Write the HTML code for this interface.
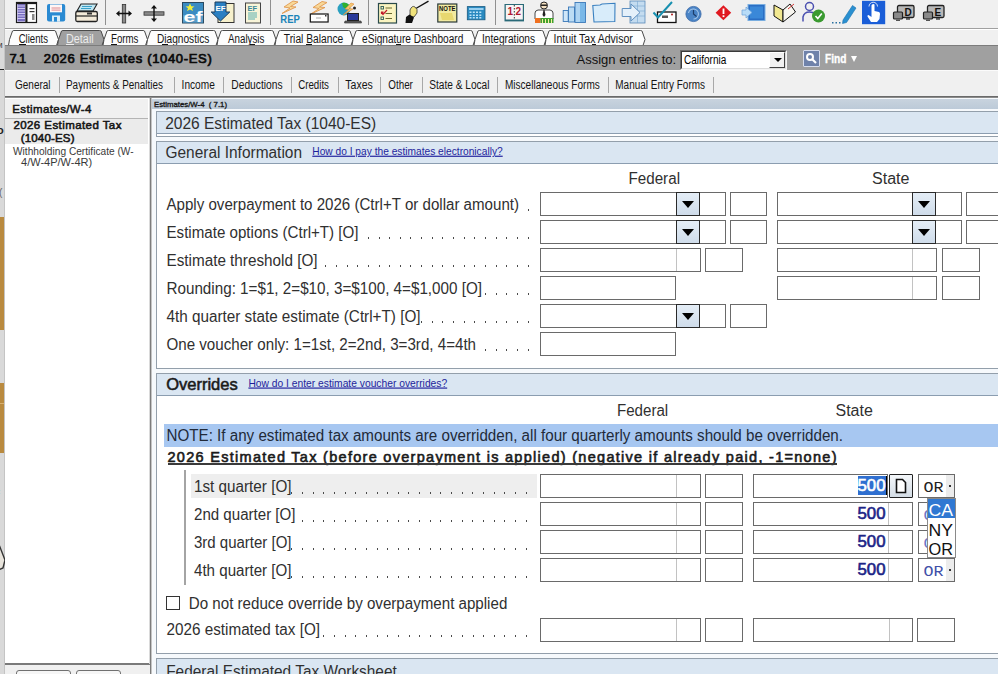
<!DOCTYPE html><html><head><meta charset="utf-8"><style>
*{margin:0;padding:0;box-sizing:border-box}
html,body{width:998px;height:674px;overflow:hidden;background:#f0f0f0;font-family:"Liberation Sans",sans-serif;color:#000}
.a{position:absolute}
.t{position:absolute;white-space:nowrap}
.inp{position:absolute;border:1px solid #6a6a6a;background:#fff}
.dd{position:absolute;width:24px;height:24px;background:linear-gradient(#e4edf6,#cfdcea);border:1px solid #2a2a2a}
.dd:after{content:"";position:absolute;left:5px;top:8px;border-left:6px solid transparent;border-right:6px solid transparent;border-top:7px solid #000}
.dots{position:absolute;height:2px;background-image:linear-gradient(to right,#5a5a5a 1.3px,transparent 1.3px);background-size:10.6px 2px;background-repeat:repeat-x;background-position:right top}
.box{position:absolute;border:1px solid #939fab;background:#fff}
.hdr{position:absolute;left:0;top:0;right:0;background:#dae6f2;border-bottom:1px solid #8b9db0}
</style></head><body>
<div class="a" style="left:0px;top:0px;width:5px;height:674px;background:#d9d9d9;"></div>
<div class="a" style="left:0px;top:217px;width:5px;height:113px;background:#b98a3f;"></div>
<div class="a" style="left:0px;top:383px;width:5px;height:70px;background:#b98a3f;"></div>
<div class="a" style="left:0px;top:403px;width:5px;height:1px;background:#d8b070;"></div>
<svg class="a" style="left:0;top:0;overflow:visible" width="1" height="1"><text x="-4" y="48" font-family="Liberation Sans" font-size="8" font-weight="normal" fill="#333" style="" text-decoration="">M</text></svg>
<div class="a" style="left:0px;top:69px;width:4px;height:1px;background:#222;"></div>
<svg class="a" style="left:0;top:0;overflow:visible" width="1" height="1"><text x="-3" y="133.5" font-family="Liberation Sans" font-size="11" font-weight="bold" fill="#222" style="" text-decoration="">o</text></svg>
<svg class="a" style="left:0;top:0;overflow:visible" width="1" height="1"><text x="-1" y="196" font-family="Liberation Sans" font-size="10" font-weight="normal" fill="#666" style="" text-decoration="">(</text></svg>
<div class="a" style="left:4px;top:0px;width:1px;height:674px;background:#c4c4c4;"></div>
<svg class="a" style="left:0;top:0;overflow:visible" width="1" height="1"><text x="-7" y="367" font-family="Liberation Sans" font-size="11" font-weight="bold" fill="#222" style="" text-decoration="">l</text></svg>
<svg class="a" style="left:0;top:0;overflow:visible" width="1" height="1"><text x="-6" y="495" font-family="Liberation Sans" font-size="11" font-weight="bold" fill="#2a6ad0" style="" text-decoration="">c</text></svg>
<svg class="a" style="left:0;top:540px" width="6" height="40"><path d="M-2,2 L5,20 L3,28 L-2,30" fill="#e8e4dc" stroke="#333" stroke-width="1.4"/></svg>
<div class="a" style="left:5px;top:0px;width:993px;height:28px;background:#f0f0f0;"></div>
<div class="a" style="left:5px;top:28px;width:993px;height:1px;background:#a0a0a0;"></div>
<div class="a" style="left:5px;top:29px;width:993px;height:1px;background:#ffffff;"></div>
<div class="a" style="left:105px;top:0px;width:1px;height:25px;background:#909090;"></div>
<div class="a" style="left:270px;top:0px;width:1px;height:25px;background:#909090;"></div>
<div class="a" style="left:368px;top:0px;width:1px;height:25px;background:#909090;"></div>
<div class="a" style="left:495px;top:0px;width:1px;height:25px;background:#909090;"></div>
<svg class="a" style="left:0;top:0" width="998" height="28" viewBox="0 0 998 28">
<!-- 1 form view -->
<rect x="16.5" y="2.5" width="20" height="20" fill="#fff" stroke="#1a1a1a" stroke-width="1.2"/>
<rect x="17.5" y="3.5" width="7.5" height="18" fill="#7a6fc0"/>
<g stroke="#e6e2ff" stroke-width="0.8"><line x1="17.5" y1="6" x2="25" y2="6"/><line x1="17.5" y1="8.5" x2="25" y2="8.5"/><line x1="17.5" y1="11" x2="25" y2="11"/><line x1="17.5" y1="13.5" x2="25" y2="13.5"/><line x1="17.5" y1="16" x2="25" y2="16"/><line x1="17.5" y1="18.5" x2="25" y2="18.5"/></g>
<rect x="25.3" y="2.5" width="2.2" height="20" fill="#1a1a1a"/>
<rect x="16.5" y="2.5" width="20" height="1.6" fill="#1a1a1a"/>
<rect x="29.5" y="8" width="5" height="1.2" fill="#333"/><rect x="29.5" y="11" width="5" height="1.2" fill="#333"/>
<rect x="32" y="14" width="2.5" height="6" fill="#888"/>
<!-- 2 floppy -->
<rect x="47" y="4" width="18.2" height="17.6" rx="2" fill="#2a8ad2"/>
<rect x="50" y="4.5" width="12" height="7.8" fill="#fdf6f6"/>
<rect x="51.5" y="7.5" width="9" height="1" fill="#e08a90"/><rect x="51.5" y="9.6" width="9" height="1" fill="#e08a90"/>
<rect x="52" y="15.5" width="8" height="6" fill="#dbeef8"/><rect x="54" y="17" width="3" height="4.6" fill="#2a8ad2"/>
<!-- 3 printer -->
<path d="M81,4 L97,4 L93,11 L77,11 Z" fill="#bfe6f2" stroke="#222" stroke-width="1.1"/>
<line x1="82" y1="6.5" x2="92" y2="6.5" stroke="#3aa0c8" stroke-width="1"/><line x1="81" y1="8.5" x2="91" y2="8.5" stroke="#3aa0c8" stroke-width="1"/>
<rect x="75.8" y="11.5" width="21.5" height="10" rx="1.5" fill="#f3ead8" stroke="#222" stroke-width="1.3"/>
<line x1="76" y1="16" x2="97" y2="16" stroke="#222" stroke-width="1.2"/>
<rect x="87" y="12.5" width="5" height="2" fill="#333"/>
<!-- 4 split vertical -->
<rect x="122.3" y="4.5" width="3.4" height="18.5" fill="#8a8a8a" stroke="#333" stroke-width="0.8"/>
<path d="M116,13.5 L119.5,10.5 L119.5,12.8 L128.5,12.8 L128.5,10.5 L132,13.5 L128.5,16.5 L128.5,14.2 L119.5,14.2 L119.5,16.5 Z" fill="#111"/>
<!-- 5 split horizontal -->
<rect x="144" y="11.8" width="20" height="3.4" fill="#8a8a8a" stroke="#333" stroke-width="0.8"/>
<path d="M154,5 L157,8.5 L154.7,8.5 L154.7,18.5 L157,18.5 L154,22 L151,18.5 L153.3,18.5 L153.3,8.5 L151,8.5 Z" fill="#111"/>
<!-- 6 ef -->
<rect x="182.5" y="2.5" width="21" height="20.5" fill="#3b8cc2" stroke="#2a4a60" stroke-width="1"/>
<rect x="183" y="15" width="20" height="7.5" fill="#5a9cc8"/>
<path d="M190,3.5 L191.3,6.3 L194.5,6.5 L192,8.3 L193,11 L190,9.5 L187,11 L188,8.3 L185.5,6.5 L188.7,6.3 Z" fill="#f2f03a"/>
<text x="183.5" y="21.5" font-family="Liberation Sans" font-weight="bold" font-size="14" fill="#fff" textLength="19" lengthAdjust="spacingAndGlyphs">ef</text>
<!-- 7 EF download -->
<rect x="218" y="3.5" width="16" height="19" fill="#f6f0cc" stroke="#333" stroke-width="1"/>
<path d="M215,2 L226,2 L226,12 L229.8,12 L220.5,21 L211.2,12 L215,12 Z" fill="#2a7fc2" stroke="#1d3d5a" stroke-width="1"/>
<text x="215.5" y="10.5" font-family="Liberation Sans" font-weight="bold" font-size="8" fill="#fff">EF</text>
<!-- 8 EF doc -->
<rect x="245.5" y="3" width="15" height="20" fill="#f8f4d8" stroke="#444" stroke-width="1"/>
<text x="247.5" y="11" font-family="Liberation Sans" font-weight="bold" font-size="7.5" fill="#3a8a9a">EF</text>
<g stroke="#5ab0b0" stroke-width="1"><line x1="248" y1="13" x2="257" y2="13"/><line x1="248" y1="15" x2="257" y2="15"/><line x1="248" y1="17" x2="257" y2="17"/><line x1="248" y1="19" x2="255" y2="19"/></g>
<!-- 9 REP -->
<path d="M293,1 L284,7 L290,8 L282,13.5 L296,7 L290.5,6.5 L298,2 Z" fill="#f8d898" stroke="#e09850" stroke-width="0.9"/>
<text x="280.3" y="22.8" font-family="Liberation Sans" font-weight="bold" font-size="10" fill="#1a84b8" textLength="19.5" lengthAdjust="spacingAndGlyphs">REP</text>
<!-- 10 lightning envelope -->
<path d="M322,1.5 L313,7.5 L319,8.5 L311,14 L325,7.5 L319.5,7 L327,2.5 Z" fill="#f8d898" stroke="#e09850" stroke-width="0.9"/>
<rect x="310.3" y="14" width="17.8" height="8" fill="#fff" stroke="#111" stroke-width="1.2"/>
<rect x="316" y="17.5" width="5" height="1" fill="#aaa"/><rect x="325" y="15" width="1.5" height="1.5" fill="#333"/>
<!-- 11 globe laptop -->
<circle cx="344" cy="9" r="6.5" fill="#2aa0c0"/><path d="M342,3 Q348,2 350,7 L346,9 L343,7 Z" fill="#30b030"/>
<path d="M351,3 L345,9 L349,9.5 L343,15 L353,9 L349,8.5 L354,4 Z" fill="#f4c870" stroke="#e08a40" stroke-width="0.6"/>
<circle cx="354.5" cy="8" r="1.5" fill="#222"/>
<rect x="347.5" y="13.5" width="11" height="7" fill="#2a3a9a" stroke="#222" stroke-width="1"/>
<path d="M345,21 L361,21 L361.5,23 L344.5,23 Z" fill="#666" stroke="#222" stroke-width="0.6"/>
<!-- 12 checklist -->
<rect x="378.5" y="3.5" width="18" height="19.5" fill="#faf4c0" stroke="#2a4a4a" stroke-width="1.2"/>
<rect x="381" y="6.5" width="2.5" height="2.5" fill="none" stroke="#2a5a5a" stroke-width="0.9"/>
<rect x="381" y="11.5" width="2.5" height="2.5" fill="#c02030" />
<rect x="381" y="17" width="2.5" height="2.5" fill="none" stroke="#2a5a5a" stroke-width="0.9"/>
<path d="M381,12.5 L383,14.5 L387,10" fill="none" stroke="#c01828" stroke-width="1.2"/>
<g stroke="#6a6a30" stroke-width="1"><line x1="385.5" y1="8" x2="392" y2="8"/><line x1="385.5" y1="13.5" x2="392" y2="13.5"/><line x1="385.5" y1="18.5" x2="392" y2="18.5"/></g>
<!-- 13 hand pointer -->
<line x1="415" y1="9" x2="428.5" y2="1.2" stroke="#111" stroke-width="1.4"/>
<path d="M410,10 Q412,5 415,7 Q418,9 417,13 L414,17 L410,16 Z" fill="#f0e27a" stroke="#333" stroke-width="0.8"/>
<path d="M405.5,23 L406,17 L409.5,14.5 L414,17.5 L412,23 Z" fill="#111"/>
<!-- 14 NOTE -->
<rect x="437.8" y="4" width="19" height="18" fill="#f2eaa0" stroke="#2a3a3a" stroke-width="1.2"/>
<text x="439" y="10.5" font-family="Liberation Sans" font-weight="bold" font-size="6.5" fill="#111" textLength="16.5" lengthAdjust="spacingAndGlyphs">NOTE</text>
<path d="M440,13 L452,13 L454,20 L442,20 Z" fill="#e8d870"/>
<!-- 15 calculator -->
<rect x="467.3" y="6.6" width="17.7" height="13.2" fill="#2a8ac0" stroke="#1a5a80" stroke-width="0.8"/>
<rect x="469" y="8" width="14.5" height="2" fill="#9ad0f0"/>
<g fill="#bde4f8"><rect x="469.5" y="11.5" width="2" height="1.5"/><rect x="472.8" y="11.5" width="2" height="1.5"/><rect x="476" y="11.5" width="2" height="1.5"/><rect x="479.3" y="11.5" width="2" height="1.5"/><rect x="469.5" y="14.5" width="2" height="1.5"/><rect x="472.8" y="14.5" width="2" height="1.5"/><rect x="476" y="14.5" width="2" height="1.5"/><rect x="479.3" y="14.5" width="2" height="1.5"/><rect x="469.5" y="17" width="2" height="1.5"/><rect x="472.8" y="17" width="2" height="1.5"/><rect x="476" y="17" width="2" height="1.5"/><rect x="479.3" y="17" width="2" height="1.5"/></g>
<!-- 16 book 1|2 -->
<rect x="504.5" y="4" width="19.5" height="17.4" fill="#2a6a78"/>
<rect x="505.8" y="5" width="17" height="14.5" fill="#f8f4f4"/>
<text x="507.5" y="15" font-family="Liberation Sans" font-weight="bold" font-size="10" fill="#b01830">1</text>
<text x="515.5" y="15" font-family="Liberation Sans" font-weight="bold" font-size="10" fill="#b01830">2</text>
<line x1="514.3" y1="5" x2="514.3" y2="19.5" stroke="#333" stroke-width="1" stroke-dasharray="1.5,1.5"/>
<!-- 17 person -->
<circle cx="544" cy="5.5" r="3.5" fill="#f4e0c0" stroke="#222" stroke-width="1"/>
<rect x="541" y="4.5" width="6" height="1.4" fill="#111"/>
<path d="M535,19 L535,13 Q535,10.5 538,10 L550,10 Q553,10.5 553,13 L553,19 Z" fill="#fff" stroke="#333" stroke-width="0.9"/>
<path d="M543.5,10 L544.5,10 L545.5,15 L544,17 L542.5,15 Z" fill="#222"/>
<rect x="535" y="18" width="5.5" height="5" fill="#f07020"/><rect x="540.5" y="18" width="13" height="5" fill="#40a030"/>
<g fill="#f8f0a0"><rect x="542" y="19" width="1" height="4"/><rect x="545" y="19" width="1" height="4"/><rect x="548" y="19" width="1" height="4"/><rect x="551" y="19" width="1" height="4"/></g>
<!-- 18 bar chart -->
<g stroke="#3a78b8" stroke-width="0.9"><rect x="563.2" y="10.5" width="5" height="11" fill="#cfe6f8"/><rect x="568.5" y="7" width="6" height="15" fill="#bcdcf4"/><rect x="575" y="2.5" width="10.5" height="20" fill="#aed4f2"/></g>
<rect x="580" y="3" width="5" height="19" fill="#7ab8e8"/>
<!-- 19 folder -->
<path d="M592.8,5.5 L600,5 L602,4 L615,3.3 L614.8,21.5 L594,22 Z" fill="#d8ecfa" stroke="#3a80c0" stroke-width="1.1"/>
<!-- 20 arrow grid -->
<rect x="630" y="1" width="15" height="22" fill="#c4dcf0" stroke="#5a8ab8" stroke-width="0.8"/>
<g stroke="#7aa8d0" stroke-width="0.6"><line x1="630" y1="6" x2="645" y2="6"/><line x1="630" y1="11" x2="645" y2="11"/><line x1="630" y1="16" x2="645" y2="16"/><line x1="637.5" y1="1" x2="637.5" y2="23"/></g>
<path d="M622.2,8.5 L631,8.5 L631,4 L640,12.5 L631,21 L631,16.5 L622.2,16.5 Z" fill="#e4f0fa" stroke="#6090c0" stroke-width="1"/>
<!-- 21 check envelope -->
<rect x="657.5" y="12" width="18.5" height="10.5" fill="#fff" stroke="#111" stroke-width="1.3"/>
<rect x="662" y="15.5" width="6" height="2.5" fill="#555"/><circle cx="672" cy="14.5" r="1" fill="#b02020"/>
<path d="M653.5,12.5 L658,17.5 L672,2" fill="none" stroke="#1890b0" stroke-width="2"/>
<!-- 22 clock -->
<circle cx="693.5" cy="14" r="7.6" fill="#4a84c6" stroke="#3a6aa8" stroke-width="0.8"/>
<path d="M688.5,13 A5,5 0 1 1 693.5,19" fill="none" stroke="#a8c8ea" stroke-width="1.1"/>
<path d="M693.5,10 L693.5,14 L696.5,16.5" fill="none" stroke="#1d3d6a" stroke-width="1.2"/>
<!-- 23 red diamond -->
<path d="M723.4,5.2 L731.2,12.8 L723.4,20.3 L715.6,12.8 Z" fill="#e01820"/>
<rect x="722.6" y="8.5" width="1.8" height="5.5" fill="#fff"/><rect x="722.6" y="15.3" width="1.8" height="1.8" fill="#fff"/>
<!-- 24 blue monitor arrow -->
<rect x="748" y="4.5" width="17" height="16" fill="#2a6ec4" stroke="#7aaee0" stroke-width="1"/>
<rect x="750" y="6.5" width="13" height="12" fill="#3a88d8"/>
<path d="M742,10 L746,10 L746,7 L752,12.5 L746,18 L746,15 L742,15 Z" fill="#b8dcf8" stroke="#6aa0d8" stroke-width="0.7"/>
<!-- 25 open book/folder -->
<path d="M774,5 L783,10 L783,22 L774,16 Z" fill="#f2e890" stroke="#111" stroke-width="1"/>
<path d="M783,10 L790,4 L795.5,12 L783,22 Z" fill="#f8f6f0" stroke="#111" stroke-width="1"/>
<line x1="788" y1="9" x2="794" y2="4" stroke="#d02020" stroke-width="0.9"/>
<!-- 26 person check -->
<circle cx="809.5" cy="6.5" r="4" fill="none" stroke="#4a50b0" stroke-width="1.5"/>
<path d="M803,21.5 L803,17 Q804,12 809.5,12 Q813,12 815,14" fill="none" stroke="#4a50b0" stroke-width="1.5"/>
<circle cx="818.5" cy="16" r="6.5" fill="#3a9a30"/>
<path d="M815.5,16 L817.8,18.5 L821.8,13.5" fill="none" stroke="#fff" stroke-width="1.6"/>
<!-- 27 pencil dots -->
<path d="M843,20 L852.5,5.5 L856,8 L846.5,22.5 L842.5,23.5 Z" fill="#2a90d0" stroke="#1a70b0" stroke-width="0.6"/>
<rect x="832" y="22" width="1.5" height="1.5" fill="#2a70a0"/><rect x="835.5" y="22" width="1.5" height="1.5" fill="#2a70a0"/><rect x="839" y="22" width="1.5" height="1.5" fill="#2a70a0"/>
<!-- 28 blue hand -->
<rect x="862" y="0.8" width="23.2" height="23.4" fill="#1a5ed8"/>
<path d="M872,4.5 Q873.5,3.5 874.5,4.5 L874.5,11 L879,12 Q880,12.5 880,14 L879.5,19 L877,22 L871,22 L867.5,16.5 Q867,15 868.5,15 L871.5,17 L871.5,5.5 Z" fill="#fff"/>
<path d="M869,6.5 A4,4 0 0 1 877.5,6.5" fill="none" stroke="#fff" stroke-width="0.8"/>
<!-- 29 D monitors -->
<rect x="897.5" y="5.5" width="16.5" height="12" rx="1.5" fill="#b8b8b8" stroke="#222" stroke-width="1.3"/>
<rect x="906" y="18" width="4" height="1.8" fill="#555"/>
<rect x="893.5" y="12" width="9" height="7" rx="1" fill="#8a8a8a" stroke="#222" stroke-width="1.2"/>
<rect x="896" y="19.5" width="4" height="1.5" fill="#555"/>
<text x="904.5" y="15.5" font-family="Liberation Sans" font-weight="bold" font-size="10" fill="#111">D</text>
<!-- 30 E monitors -->
<rect x="927.5" y="5.5" width="16.5" height="12" rx="1.5" fill="#b8b8b8" stroke="#222" stroke-width="1.3"/>
<rect x="936" y="18" width="4" height="1.8" fill="#555"/>
<rect x="923.5" y="12" width="9" height="7" rx="1" fill="#8a8a8a" stroke="#222" stroke-width="1.2"/>
<rect x="926" y="19.5" width="4" height="1.5" fill="#555"/>
<text x="934.5" y="15.5" font-family="Liberation Sans" font-weight="bold" font-size="10" fill="#111">E</text>
</svg>

<svg class="a" style="left:0;top:0" width="998" height="46"><path d="M8.5,45.5 L9.5,39.5 L12.5,31 Q13.0,30.5 14.0,30.5 L54.0,30.5 Q55.0,30.5 55.5,31 L58.5,39.5 L56.5,45.5" fill="#fdfdfd" stroke="#4a4a4a" stroke-width="1"/><path d="M57.5,45.5 L58.5,39.5 L61.5,31 Q62.0,30.5 63.0,30.5 L99.5,30.5 Q100.5,30.5 101,31 L104,39.5 L102,45.5" fill="#a0a0a0" stroke="#4a4a4a" stroke-width="1"/><path d="M103,45.5 L104,39.5 L107,31 Q107.5,30.5 108.5,30.5 L143.0,30.5 Q144.0,30.5 144.5,31 L147.5,39.5 L145.5,45.5" fill="#fdfdfd" stroke="#4a4a4a" stroke-width="1"/><path d="M146.5,45.5 L147.5,39.5 L150.5,31 Q151.0,30.5 152.0,30.5 L213.5,30.5 Q214.5,30.5 215,31 L218,39.5 L216,45.5" fill="#fdfdfd" stroke="#4a4a4a" stroke-width="1"/><path d="M217,45.5 L218,39.5 L221,31 Q221.5,30.5 222.5,30.5 L271.5,30.5 Q272.5,30.5 273,31 L276,39.5 L274,45.5" fill="#fdfdfd" stroke="#4a4a4a" stroke-width="1"/><path d="M275,45.5 L276,39.5 L279,31 Q279.5,30.5 280.5,30.5 L348.5,30.5 Q349.5,30.5 350,31 L353,39.5 L351,45.5" fill="#fdfdfd" stroke="#4a4a4a" stroke-width="1"/><path d="M352,45.5 L353,39.5 L356,31 Q356.5,30.5 357.5,30.5 L470.5,30.5 Q471.5,30.5 472,31 L475,39.5 L473,45.5" fill="#fdfdfd" stroke="#4a4a4a" stroke-width="1"/><path d="M474,45.5 L475,39.5 L478,31 Q478.5,30.5 479.5,30.5 L541.5,30.5 Q542.5,30.5 543,31 L546,39.5 L544,45.5" fill="#fdfdfd" stroke="#4a4a4a" stroke-width="1"/><path d="M545,45.5 L546,39.5 L549,31 Q549.5,30.5 550.5,30.5 L640.5,30.5 Q641.5,30.5 642,31 L645,39.5 L643,45.5" fill="#fdfdfd" stroke="#4a4a4a" stroke-width="1"/><text x="18.7" y="42.5" textLength="29.3" lengthAdjust="spacingAndGlyphs" font-family="Liberation Sans" font-size="12.5" fill="#151515">Clients</text><text x="66" y="42.5" textLength="27.7" lengthAdjust="spacingAndGlyphs" font-family="Liberation Sans" font-size="12.5" fill="#ececec">Detail</text><text x="111" y="42.5" textLength="27.4" lengthAdjust="spacingAndGlyphs" font-family="Liberation Sans" font-size="12.5" fill="#151515">Forms</text><text x="157" y="42.5" textLength="52.4" lengthAdjust="spacingAndGlyphs" font-family="Liberation Sans" font-size="12.5" fill="#151515">Diagnostics</text><text x="228" y="42.5" textLength="36.4" lengthAdjust="spacingAndGlyphs" font-family="Liberation Sans" font-size="12.5" fill="#151515">Analysis</text><text x="283.8" y="42.5" textLength="59.5" lengthAdjust="spacingAndGlyphs" font-family="Liberation Sans" font-size="12.5" fill="#151515">Trial Balance</text><text x="362" y="42.5" textLength="101.3" lengthAdjust="spacingAndGlyphs" font-family="Liberation Sans" font-size="12.5" fill="#151515">eSignature Dashboard</text><text x="482" y="42.5" textLength="53" lengthAdjust="spacingAndGlyphs" font-family="Liberation Sans" font-size="12.5" fill="#151515">Integrations</text><text x="553.5" y="42.5" textLength="79.3" lengthAdjust="spacingAndGlyphs" font-family="Liberation Sans" font-size="12.5" fill="#151515">Intuit Tax Advisor</text></svg>
<div class="a" style="left:19px;top:43.5px;width:7px;height:1px;background:#151515;"></div>
<div class="a" style="left:66px;top:43.5px;width:8px;height:1px;background:#ececec;"></div>
<div class="a" style="left:111px;top:43.5px;width:6px;height:1px;background:#151515;"></div>
<div class="a" style="left:162px;top:43.5px;width:6px;height:1px;background:#151515;"></div>
<div class="a" style="left:250px;top:43.5px;width:5px;height:1px;background:#151515;"></div>
<div class="a" style="left:306px;top:43.5px;width:6px;height:1px;background:#151515;"></div>
<div class="a" style="left:396px;top:43.5px;width:5px;height:1px;background:#151515;"></div>
<div class="a" style="left:592px;top:43.5px;width:4px;height:1px;background:#151515;"></div>
<div class="a" style="left:5px;top:45px;width:993px;height:1px;background:#7c7c7c;"></div>
<div class="a" style="left:5px;top:46px;width:993px;height:24px;background:#a0a0a0;"></div>
<svg class="a" style="left:0;top:0;overflow:visible" width="1" height="1"><text x="9.6" y="62.8" textLength="16.6" lengthAdjust="spacing" stroke="#0a0a0a" stroke-width="0.7" font-family="Liberation Sans" font-size="13" font-weight="normal" fill="#0a0a0a" style="" text-decoration="">7.1</text></svg>
<svg class="a" style="left:0;top:0;overflow:visible" width="1" height="1"><text x="43.8" y="62.8" textLength="168" lengthAdjust="spacing" stroke="#0a0a0a" stroke-width="0.7" font-family="Liberation Sans" font-size="13" font-weight="normal" fill="#0a0a0a" style="" text-decoration="">2026 Estimates (1040-ES)</text></svg>
<div class="t" style="left:576.5px;top:52.50px;font-size:13px;line-height:13px;font-weight:normal;color:#111;">Assign entries to:</div>
<div class="a" style="left:680px;top:50px;width:107px;height:20px;background:#fff;border-top:1px solid #6d6d6d;border-left:1px solid #6d6d6d;border-bottom:1px solid #f4f4f4;border-right:1px solid #f4f4f4"></div>
<div class="a" style="left:681px;top:51px;width:105px;height:18px;border-top:1px solid #3a3a3a;border-left:1px solid #3a3a3a;border-bottom:1px solid #dcdcdc;border-right:1px solid #dcdcdc"></div>
<div class="a" style="left:769px;top:52px;width:16px;height:16px;background:#f0f0f0;border-top:1px solid #fff;border-left:1px solid #fff;border-bottom:1px solid #404040;border-right:1px solid #404040"></div>
<div class="a" style="left:773.5px;top:58px;width:0;height:0;border-left:4px solid transparent;border-right:4px solid transparent;border-top:4px solid #000"></div>
<svg class="a" style="left:0;top:0;overflow:visible" width="1" height="1"><text x="684" y="64" textLength="42.3" lengthAdjust="spacingAndGlyphs" font-family="Liberation Sans" font-size="12" font-weight="normal" fill="#000" style="" text-decoration="">California</text></svg>
<div class="a" style="left:803px;top:49.5px;width:17px;height:17px;background:#6f82aa;border:1px solid #d6dcec;border-radius:1px"></div>
<svg class="a" style="left:803px;top:49.5px" width="17" height="17"><circle cx="7" cy="7" r="3" fill="none" stroke="#fff" stroke-width="2"/><line x1="9" y1="9" x2="13" y2="13" stroke="#fff" stroke-width="2.2"/></svg>
<svg class="a" style="left:0;top:0;overflow:visible" width="1" height="1"><text x="825" y="62.8" textLength="21.5" lengthAdjust="spacingAndGlyphs" stroke="#ffffff" stroke-width="0.35" font-family="Liberation Sans" font-size="12.5" font-weight="bold" fill="#ffffff" style="" text-decoration="">Find</text></svg>
<div class="a" style="left:850.5px;top:56px;width:0;height:0;border-left:3px solid transparent;border-right:3px solid transparent;border-top:6px solid #ffffff"></div>
<div class="a" style="left:5px;top:70px;width:993px;height:26px;background:#f0f0f0;"></div>
<div class="a" style="left:5px;top:70px;width:993px;height:1px;background:#fbfbfb;"></div>
<div class="a" style="left:5px;top:96px;width:993px;height:1px;background:#6a6a6a;"></div>
<div class="a" style="left:5px;top:97px;width:993px;height:1px;background:#8c8c8c;"></div>
<div class="a" style="left:5px;top:98px;width:993px;height:1px;background:#ffffff;"></div>
<svg class="a" style="left:0;top:0;overflow:visible" width="1" height="1"><text x="15" y="89.3" textLength="35.6" lengthAdjust="spacingAndGlyphs" font-family="Liberation Sans" font-size="12" font-weight="normal" fill="#151515" style="" text-decoration="">General</text></svg>
<svg class="a" style="left:0;top:0;overflow:visible" width="1" height="1"><text x="66" y="89.3" textLength="97" lengthAdjust="spacingAndGlyphs" font-family="Liberation Sans" font-size="12" font-weight="normal" fill="#151515" style="" text-decoration="">Payments &amp; Penalties</text></svg>
<svg class="a" style="left:0;top:0;overflow:visible" width="1" height="1"><text x="181.6" y="89.3" textLength="33.2" lengthAdjust="spacingAndGlyphs" font-family="Liberation Sans" font-size="12" font-weight="normal" fill="#151515" style="" text-decoration="">Income</text></svg>
<svg class="a" style="left:0;top:0;overflow:visible" width="1" height="1"><text x="231.3" y="89.3" textLength="51.3" lengthAdjust="spacingAndGlyphs" font-family="Liberation Sans" font-size="12" font-weight="normal" fill="#151515" style="" text-decoration="">Deductions</text></svg>
<svg class="a" style="left:0;top:0;overflow:visible" width="1" height="1"><text x="298.2" y="89.3" textLength="30.8" lengthAdjust="spacingAndGlyphs" font-family="Liberation Sans" font-size="12" font-weight="normal" fill="#151515" style="" text-decoration="">Credits</text></svg>
<svg class="a" style="left:0;top:0;overflow:visible" width="1" height="1"><text x="345.3" y="89.3" textLength="27.5" lengthAdjust="spacingAndGlyphs" font-family="Liberation Sans" font-size="12" font-weight="normal" fill="#151515" style="" text-decoration="">Taxes</text></svg>
<svg class="a" style="left:0;top:0;overflow:visible" width="1" height="1"><text x="388.3" y="89.3" textLength="24.6" lengthAdjust="spacingAndGlyphs" font-family="Liberation Sans" font-size="12" font-weight="normal" fill="#151515" style="" text-decoration="">Other</text></svg>
<svg class="a" style="left:0;top:0;overflow:visible" width="1" height="1"><text x="429.2" y="89.3" textLength="60.3" lengthAdjust="spacingAndGlyphs" font-family="Liberation Sans" font-size="12" font-weight="normal" fill="#151515" style="" text-decoration="">State &amp; Local</text></svg>
<svg class="a" style="left:0;top:0;overflow:visible" width="1" height="1"><text x="505" y="89.3" textLength="94.8" lengthAdjust="spacingAndGlyphs" font-family="Liberation Sans" font-size="12" font-weight="normal" fill="#151515" style="" text-decoration="">Miscellaneous Forms</text></svg>
<svg class="a" style="left:0;top:0;overflow:visible" width="1" height="1"><text x="615.3" y="89.3" textLength="89.7" lengthAdjust="spacingAndGlyphs" font-family="Liberation Sans" font-size="12" font-weight="normal" fill="#151515" style="" text-decoration="">Manual Entry Forms</text></svg>
<div class="a" style="left:59px;top:77px;width:1px;height:16px;background:#a8a8a8;"></div>
<div class="a" style="left:174.4px;top:77px;width:1px;height:16px;background:#a8a8a8;"></div>
<div class="a" style="left:223px;top:77px;width:1px;height:16px;background:#a8a8a8;"></div>
<div class="a" style="left:291.4px;top:77px;width:1px;height:16px;background:#a8a8a8;"></div>
<div class="a" style="left:337.7px;top:77px;width:1px;height:16px;background:#a8a8a8;"></div>
<div class="a" style="left:380.3px;top:77px;width:1px;height:16px;background:#a8a8a8;"></div>
<div class="a" style="left:421.7px;top:77px;width:1px;height:16px;background:#a8a8a8;"></div>
<div class="a" style="left:497px;top:77px;width:1px;height:16px;background:#a8a8a8;"></div>
<div class="a" style="left:607.8px;top:77px;width:1px;height:16px;background:#a8a8a8;"></div>
<div class="a" style="left:713px;top:77px;width:1px;height:16px;background:#a8a8a8;"></div>
<div class="a" style="left:5px;top:98px;width:144px;height:566px;background:#ffffff;"></div>
<div class="a" style="left:5px;top:99px;width:143px;height:19px;background:#f0f0f0;"></div>
<div class="a" style="left:5px;top:118px;width:143px;height:1px;background:#b4b4b4;"></div>
<div class="a" style="left:5px;top:119px;width:143px;height:25px;background:#ebebeb;"></div>
<svg class="a" style="left:0;top:0;overflow:visible" width="1" height="1"><text x="12.3" y="112.5" textLength="79.2" lengthAdjust="spacing" stroke="#151515" stroke-width="0.5" font-family="Liberation Sans" font-size="11.5" font-weight="normal" fill="#151515" style="" text-decoration="">Estimates/W-4</text></svg>
<svg class="a" style="left:0;top:0;overflow:visible" width="1" height="1"><text x="13.4" y="129.2" textLength="108" lengthAdjust="spacing" stroke="#151515" stroke-width="0.55" font-family="Liberation Sans" font-size="11.5" font-weight="normal" fill="#151515" style="" text-decoration="">2026 Estimated Tax</text></svg>
<svg class="a" style="left:0;top:0;overflow:visible" width="1" height="1"><text x="20.7" y="141.6" textLength="53.8" lengthAdjust="spacing" stroke="#151515" stroke-width="0.55" font-family="Liberation Sans" font-size="11.5" font-weight="normal" fill="#151515" style="" text-decoration="">(1040-ES)</text></svg>
<svg class="a" style="left:0;top:0;overflow:visible" width="1" height="1"><text x="13" y="154.7" textLength="120.6" lengthAdjust="spacingAndGlyphs" font-family="Liberation Sans" font-size="11.5" font-weight="normal" fill="#3a3a3a" style="" text-decoration="">Withholding Certificate (W-</text></svg>
<svg class="a" style="left:0;top:0;overflow:visible" width="1" height="1"><text x="21" y="166.3" textLength="71.2" lengthAdjust="spacingAndGlyphs" font-family="Liberation Sans" font-size="11.5" font-weight="normal" fill="#3a3a3a" style="" text-decoration="">4/W-4P/W-4R)</text></svg>
<div class="a" style="left:5px;top:663px;width:145px;height:2px;background:#7a7a7a;"></div>
<div class="a" style="left:5px;top:665px;width:145px;height:9px;background:#f0f0f0;"></div>
<div class="a" style="left:16px;top:670px;width:55px;height:10px;border:1px solid #707070;border-radius:3px;background:#f6f6f6"></div>
<div class="a" style="left:76px;top:670px;width:45px;height:10px;border:1px solid #707070;border-radius:3px;background:#f6f6f6"></div>
<div class="a" style="left:149px;top:98px;width:1px;height:566px;background:#dadada;"></div>
<div class="a" style="left:150px;top:98px;width:1px;height:576px;background:#7c7c7c;"></div>
<div class="a" style="left:151px;top:98px;width:1px;height:576px;background:#c4c4c4;"></div>
<div class="a" style="left:152px;top:98px;width:846px;height:576px;background:#f6f9fc;"></div>
<div class="a" style="left:152px;top:99px;width:846px;height:10px;background:linear-gradient(#c8d3de,#bccad8);"></div>
<svg class="a" style="left:0;top:0;overflow:visible" width="1" height="1"><text x="154" y="107" textLength="73" lengthAdjust="spacingAndGlyphs" stroke="#1a1a1a" stroke-width="0.35" font-family="Liberation Sans" font-size="8" font-weight="normal" fill="#1a1a1a" style="" text-decoration="">Estimates/W-4&#160;&#160;( 7.1)</text></svg>
<div class="box" style="left:156px;top:111px;width:860px;height:26px"><div class="hdr" style="height:22px"></div></div>
<svg class="a" style="left:0;top:0;overflow:visible" width="1" height="1"><text x="165.2" y="129.2" textLength="211" lengthAdjust="spacingAndGlyphs" font-family="Liberation Sans" font-size="16" font-weight="normal" fill="#303030" style="" text-decoration="">2026 Estimated Tax (1040-ES)</text></svg>
<div class="box" style="left:156px;top:141px;width:860px;height:228px"><div class="hdr" style="height:22px"></div></div>
<svg class="a" style="left:0;top:0;overflow:visible" width="1" height="1"><text x="165.5" y="158.3" textLength="136.5" lengthAdjust="spacingAndGlyphs" font-family="Liberation Sans" font-size="16" font-weight="normal" fill="#303030" style="" text-decoration="">General Information</text></svg>
<svg class="a" style="left:0;top:0;overflow:visible" width="1" height="1"><text x="312.3" y="154.7" textLength="190.4" lengthAdjust="spacingAndGlyphs" font-family="Liberation Sans" font-size="11.5" font-weight="normal" fill="#1e1e9c" style="" text-decoration="underline">How do I pay the estimates electronically?</text></svg>
<div class="box" style="left:156px;top:373px;width:860px;height:281px"><div class="hdr" style="height:22px"></div></div>
<svg class="a" style="left:0;top:0;overflow:visible" width="1" height="1"><text x="166.2" y="389.6" textLength="71.5" lengthAdjust="spacingAndGlyphs" stroke="#1a1a1a" stroke-width="0.55" font-family="Liberation Sans" font-size="16" font-weight="normal" fill="#1a1a1a" style="" text-decoration="">Overrides</text></svg>
<svg class="a" style="left:0;top:0;overflow:visible" width="1" height="1"><text x="248.4" y="386.5" textLength="198.8" lengthAdjust="spacingAndGlyphs" font-family="Liberation Sans" font-size="11.5" font-weight="normal" fill="#1e1e9c" style="" text-decoration="underline">How do I enter estimate voucher overrides?</text></svg>
<div class="box" style="left:156px;top:658px;width:860px;height:43px"><div class="hdr" style="height:22px"></div></div>
<svg class="a" style="left:0;top:0;overflow:visible" width="1" height="1"><text x="166.2" y="676.5" textLength="230.6" lengthAdjust="spacingAndGlyphs" font-family="Liberation Sans" font-size="16" font-weight="normal" fill="#303030" style="" text-decoration="">Federal Estimated Tax Worksheet</text></svg>
<svg class="a" style="left:0;top:0;overflow:visible" width="1" height="1"><text x="628.5" y="184" textLength="51.5" lengthAdjust="spacingAndGlyphs" font-family="Liberation Sans" font-size="16" font-weight="normal" fill="#303030" style="" text-decoration="">Federal</text></svg>
<svg class="a" style="left:0;top:0;overflow:visible" width="1" height="1"><text x="872" y="184" textLength="37.5" lengthAdjust="spacingAndGlyphs" font-family="Liberation Sans" font-size="16" font-weight="normal" fill="#303030" style="" text-decoration="">State</text></svg>
<svg class="a" style="left:0;top:0;overflow:visible" width="1" height="1"><text x="166.5" y="209.5" textLength="352.5" lengthAdjust="spacingAndGlyphs" font-family="Liberation Sans" font-size="16" font-weight="normal" fill="#303030" style="" text-decoration="">Apply overpayment to 2026 (Ctrl+T or dollar amount)</text></svg>
<div class="a" style="left:528px;top:209px;width:1px;height:2px;background:#4a4a4a"></div>
<svg class="a" style="left:0;top:0;overflow:visible" width="1" height="1"><text x="166.5" y="237.5" textLength="192" lengthAdjust="spacingAndGlyphs" font-family="Liberation Sans" font-size="16" font-weight="normal" fill="#303030" style="" text-decoration="">Estimate options (Ctrl+T) [O]</text></svg>
<div class="a" style="left:528px;top:237px;width:1px;height:2px;background:#4a4a4a"></div><div class="a" style="left:517px;top:237px;width:1px;height:2px;background:#4a4a4a"></div><div class="a" style="left:506px;top:237px;width:1px;height:2px;background:#4a4a4a"></div><div class="a" style="left:496px;top:237px;width:1px;height:2px;background:#4a4a4a"></div><div class="a" style="left:485px;top:237px;width:1px;height:2px;background:#4a4a4a"></div><div class="a" style="left:474px;top:237px;width:1px;height:2px;background:#4a4a4a"></div><div class="a" style="left:464px;top:237px;width:1px;height:2px;background:#4a4a4a"></div><div class="a" style="left:453px;top:237px;width:1px;height:2px;background:#4a4a4a"></div><div class="a" style="left:442px;top:237px;width:1px;height:2px;background:#4a4a4a"></div><div class="a" style="left:432px;top:237px;width:1px;height:2px;background:#4a4a4a"></div><div class="a" style="left:421px;top:237px;width:1px;height:2px;background:#4a4a4a"></div><div class="a" style="left:410px;top:237px;width:1px;height:2px;background:#4a4a4a"></div><div class="a" style="left:400px;top:237px;width:1px;height:2px;background:#4a4a4a"></div><div class="a" style="left:389px;top:237px;width:1px;height:2px;background:#4a4a4a"></div><div class="a" style="left:379px;top:237px;width:1px;height:2px;background:#4a4a4a"></div><div class="a" style="left:368px;top:237px;width:1px;height:2px;background:#4a4a4a"></div>
<svg class="a" style="left:0;top:0;overflow:visible" width="1" height="1"><text x="166.5" y="265.5" textLength="151" lengthAdjust="spacingAndGlyphs" font-family="Liberation Sans" font-size="16" font-weight="normal" fill="#303030" style="" text-decoration="">Estimate threshold [O]</text></svg>
<div class="a" style="left:528px;top:265px;width:1px;height:2px;background:#4a4a4a"></div><div class="a" style="left:517px;top:265px;width:1px;height:2px;background:#4a4a4a"></div><div class="a" style="left:506px;top:265px;width:1px;height:2px;background:#4a4a4a"></div><div class="a" style="left:496px;top:265px;width:1px;height:2px;background:#4a4a4a"></div><div class="a" style="left:485px;top:265px;width:1px;height:2px;background:#4a4a4a"></div><div class="a" style="left:474px;top:265px;width:1px;height:2px;background:#4a4a4a"></div><div class="a" style="left:464px;top:265px;width:1px;height:2px;background:#4a4a4a"></div><div class="a" style="left:453px;top:265px;width:1px;height:2px;background:#4a4a4a"></div><div class="a" style="left:442px;top:265px;width:1px;height:2px;background:#4a4a4a"></div><div class="a" style="left:432px;top:265px;width:1px;height:2px;background:#4a4a4a"></div><div class="a" style="left:421px;top:265px;width:1px;height:2px;background:#4a4a4a"></div><div class="a" style="left:410px;top:265px;width:1px;height:2px;background:#4a4a4a"></div><div class="a" style="left:400px;top:265px;width:1px;height:2px;background:#4a4a4a"></div><div class="a" style="left:389px;top:265px;width:1px;height:2px;background:#4a4a4a"></div><div class="a" style="left:379px;top:265px;width:1px;height:2px;background:#4a4a4a"></div><div class="a" style="left:368px;top:265px;width:1px;height:2px;background:#4a4a4a"></div><div class="a" style="left:357px;top:265px;width:1px;height:2px;background:#4a4a4a"></div><div class="a" style="left:347px;top:265px;width:1px;height:2px;background:#4a4a4a"></div><div class="a" style="left:336px;top:265px;width:1px;height:2px;background:#4a4a4a"></div><div class="a" style="left:325px;top:265px;width:1px;height:2px;background:#4a4a4a"></div>
<svg class="a" style="left:0;top:0;overflow:visible" width="1" height="1"><text x="166.5" y="293.5" textLength="315.5" lengthAdjust="spacingAndGlyphs" font-family="Liberation Sans" font-size="16" font-weight="normal" fill="#303030" style="" text-decoration="">Rounding: 1=$1, 2=$10, 3=$100, 4=$1,000 [O]</text></svg>
<div class="a" style="left:528px;top:293px;width:1px;height:2px;background:#4a4a4a"></div><div class="a" style="left:517px;top:293px;width:1px;height:2px;background:#4a4a4a"></div><div class="a" style="left:506px;top:293px;width:1px;height:2px;background:#4a4a4a"></div><div class="a" style="left:496px;top:293px;width:1px;height:2px;background:#4a4a4a"></div><div class="a" style="left:485px;top:293px;width:1px;height:2px;background:#4a4a4a"></div>
<svg class="a" style="left:0;top:0;overflow:visible" width="1" height="1"><text x="166.5" y="321.5" textLength="254" lengthAdjust="spacingAndGlyphs" font-family="Liberation Sans" font-size="16" font-weight="normal" fill="#303030" style="" text-decoration="">4th quarter state estimate (Ctrl+T) [O]</text></svg>
<div class="a" style="left:528px;top:321px;width:1px;height:2px;background:#4a4a4a"></div><div class="a" style="left:517px;top:321px;width:1px;height:2px;background:#4a4a4a"></div><div class="a" style="left:506px;top:321px;width:1px;height:2px;background:#4a4a4a"></div><div class="a" style="left:496px;top:321px;width:1px;height:2px;background:#4a4a4a"></div><div class="a" style="left:485px;top:321px;width:1px;height:2px;background:#4a4a4a"></div><div class="a" style="left:474px;top:321px;width:1px;height:2px;background:#4a4a4a"></div><div class="a" style="left:464px;top:321px;width:1px;height:2px;background:#4a4a4a"></div><div class="a" style="left:453px;top:321px;width:1px;height:2px;background:#4a4a4a"></div><div class="a" style="left:442px;top:321px;width:1px;height:2px;background:#4a4a4a"></div><div class="a" style="left:432px;top:321px;width:1px;height:2px;background:#4a4a4a"></div><div class="a" style="left:421px;top:321px;width:1px;height:2px;background:#4a4a4a"></div>
<svg class="a" style="left:0;top:0;overflow:visible" width="1" height="1"><text x="166.5" y="349.5" textLength="309.5" lengthAdjust="spacingAndGlyphs" font-family="Liberation Sans" font-size="16" font-weight="normal" fill="#303030" style="" text-decoration="">One voucher only: 1=1st, 2=2nd, 3=3rd, 4=4th</text></svg>
<div class="a" style="left:528px;top:349px;width:1px;height:2px;background:#4a4a4a"></div><div class="a" style="left:517px;top:349px;width:1px;height:2px;background:#4a4a4a"></div><div class="a" style="left:506px;top:349px;width:1px;height:2px;background:#4a4a4a"></div><div class="a" style="left:496px;top:349px;width:1px;height:2px;background:#4a4a4a"></div><div class="a" style="left:485px;top:349px;width:1px;height:2px;background:#4a4a4a"></div>
<div class="inp" style="left:540px;top:192px;width:186px;height:24px"></div>
<div class="dd" style="left:676px;top:192px"></div>
<div class="inp" style="left:730px;top:192px;width:37px;height:24px"></div>
<div class="inp" style="left:540px;top:220px;width:186px;height:24px"></div>
<div class="dd" style="left:676px;top:220px"></div>
<div class="inp" style="left:730px;top:220px;width:37px;height:24px"></div>
<div class="inp" style="left:540px;top:248px;width:161px;height:24px"></div>
<div class="a" style="left:676px;top:249px;width:1px;height:22px;background:#c2c2c2;"></div>
<div class="inp" style="left:705px;top:248px;width:38px;height:24px"></div>
<div class="inp" style="left:540px;top:276px;width:136px;height:24px"></div>
<div class="inp" style="left:540px;top:304px;width:186px;height:24px"></div>
<div class="dd" style="left:676px;top:304px"></div>
<div class="inp" style="left:730px;top:304px;width:37px;height:24px"></div>
<div class="inp" style="left:540px;top:332px;width:136px;height:24px"></div>
<div class="inp" style="left:777px;top:192px;width:185px;height:24px"></div>
<div class="dd" style="left:912px;top:192px"></div>
<div class="inp" style="left:966px;top:192px;width:44px;height:24px"></div>
<div class="inp" style="left:777px;top:220px;width:185px;height:24px"></div>
<div class="dd" style="left:912px;top:220px"></div>
<div class="inp" style="left:966px;top:220px;width:44px;height:24px"></div>
<div class="inp" style="left:777px;top:248px;width:160px;height:24px"></div>
<div class="a" style="left:912px;top:249px;width:1px;height:22px;background:#c2c2c2;"></div>
<div class="inp" style="left:942px;top:248px;width:38px;height:24px"></div>
<div class="inp" style="left:777px;top:276px;width:160px;height:24px"></div>
<div class="a" style="left:912px;top:277px;width:1px;height:22px;background:#c2c2c2;"></div>
<div class="inp" style="left:942px;top:276px;width:38px;height:24px"></div>
<svg class="a" style="left:0;top:0;overflow:visible" width="1" height="1"><text x="617" y="415.8" textLength="51.2" lengthAdjust="spacingAndGlyphs" font-family="Liberation Sans" font-size="16" font-weight="normal" fill="#303030" style="" text-decoration="">Federal</text></svg>
<svg class="a" style="left:0;top:0;overflow:visible" width="1" height="1"><text x="835.5" y="415.8" textLength="37.3" lengthAdjust="spacingAndGlyphs" font-family="Liberation Sans" font-size="16" font-weight="normal" fill="#303030" style="" text-decoration="">State</text></svg>
<div class="a" style="left:164px;top:424px;width:834px;height:23px;background:#a7c7f1;"></div>
<svg class="a" style="left:0;top:0;overflow:visible" width="1" height="1"><text x="166.5" y="440.8" textLength="676.5" lengthAdjust="spacingAndGlyphs" font-family="Liberation Sans" font-size="16" font-weight="normal" fill="#222a38" style="" text-decoration="">NOTE: If any estimated tax amounts are overridden, all four quarterly amounts should be overridden.</text></svg>
<svg class="a" style="left:0;top:0;overflow:visible" width="1" height="1"><text x="167.5" y="461.6" textLength="669" lengthAdjust="spacing" stroke="#1a1a1a" stroke-width="0.6" font-family="Liberation Sans" font-size="14.5" font-weight="normal" fill="#1a1a1a" style="" text-decoration="">2026 Estimated Tax (before overpayment is applied) (negative if already paid, -1=none)</text></svg>
<div class="a" style="left:167.5px;top:463.3px;width:669px;height:1.6px;background:#3a3a3a;"></div>
<div class="a" style="left:184px;top:470px;width:1.5px;height:115px;background:#a4a4a4;"></div>
<div class="a" style="left:191px;top:474px;width:346px;height:24px;background:#eeeeee;"></div>
<svg class="a" style="left:0;top:0;overflow:visible" width="1" height="1"><text x="194" y="491.6" textLength="97.5" lengthAdjust="spacingAndGlyphs" font-family="Liberation Sans" font-size="16" font-weight="normal" fill="#303030" style="" text-decoration="">1st quarter [O]</text></svg>
<div class="a" style="left:526px;top:492px;width:1px;height:2px;background:#4a4a4a"></div><div class="a" style="left:515px;top:492px;width:1px;height:2px;background:#4a4a4a"></div><div class="a" style="left:504px;top:492px;width:1px;height:2px;background:#4a4a4a"></div><div class="a" style="left:494px;top:492px;width:1px;height:2px;background:#4a4a4a"></div><div class="a" style="left:483px;top:492px;width:1px;height:2px;background:#4a4a4a"></div><div class="a" style="left:472px;top:492px;width:1px;height:2px;background:#4a4a4a"></div><div class="a" style="left:462px;top:492px;width:1px;height:2px;background:#4a4a4a"></div><div class="a" style="left:451px;top:492px;width:1px;height:2px;background:#4a4a4a"></div><div class="a" style="left:440px;top:492px;width:1px;height:2px;background:#4a4a4a"></div><div class="a" style="left:430px;top:492px;width:1px;height:2px;background:#4a4a4a"></div><div class="a" style="left:419px;top:492px;width:1px;height:2px;background:#4a4a4a"></div><div class="a" style="left:408px;top:492px;width:1px;height:2px;background:#4a4a4a"></div><div class="a" style="left:398px;top:492px;width:1px;height:2px;background:#4a4a4a"></div><div class="a" style="left:387px;top:492px;width:1px;height:2px;background:#4a4a4a"></div><div class="a" style="left:377px;top:492px;width:1px;height:2px;background:#4a4a4a"></div><div class="a" style="left:366px;top:492px;width:1px;height:2px;background:#4a4a4a"></div><div class="a" style="left:355px;top:492px;width:1px;height:2px;background:#4a4a4a"></div><div class="a" style="left:345px;top:492px;width:1px;height:2px;background:#4a4a4a"></div><div class="a" style="left:334px;top:492px;width:1px;height:2px;background:#4a4a4a"></div><div class="a" style="left:323px;top:492px;width:1px;height:2px;background:#4a4a4a"></div><div class="a" style="left:313px;top:492px;width:1px;height:2px;background:#4a4a4a"></div><div class="a" style="left:302px;top:492px;width:1px;height:2px;background:#4a4a4a"></div><div class="a" style="left:291px;top:492px;width:1px;height:2px;background:#4a4a4a"></div>
<div class="inp" style="left:540px;top:474px;width:161px;height:24px"></div>
<div class="a" style="left:676px;top:475px;width:1px;height:22px;background:#c2c2c2;"></div>
<div class="inp" style="left:705px;top:474px;width:38px;height:24px"></div>
<div class="inp" style="left:753px;top:474px;width:135px;height:24px"></div>
<svg class="a" style="left:0;top:0;overflow:visible" width="1" height="1"><text x="194" y="519.6" textLength="101.5" lengthAdjust="spacingAndGlyphs" font-family="Liberation Sans" font-size="16" font-weight="normal" fill="#303030" style="" text-decoration="">2nd quarter [O]</text></svg>
<div class="a" style="left:526px;top:520px;width:1px;height:2px;background:#4a4a4a"></div><div class="a" style="left:515px;top:520px;width:1px;height:2px;background:#4a4a4a"></div><div class="a" style="left:504px;top:520px;width:1px;height:2px;background:#4a4a4a"></div><div class="a" style="left:494px;top:520px;width:1px;height:2px;background:#4a4a4a"></div><div class="a" style="left:483px;top:520px;width:1px;height:2px;background:#4a4a4a"></div><div class="a" style="left:472px;top:520px;width:1px;height:2px;background:#4a4a4a"></div><div class="a" style="left:462px;top:520px;width:1px;height:2px;background:#4a4a4a"></div><div class="a" style="left:451px;top:520px;width:1px;height:2px;background:#4a4a4a"></div><div class="a" style="left:440px;top:520px;width:1px;height:2px;background:#4a4a4a"></div><div class="a" style="left:430px;top:520px;width:1px;height:2px;background:#4a4a4a"></div><div class="a" style="left:419px;top:520px;width:1px;height:2px;background:#4a4a4a"></div><div class="a" style="left:408px;top:520px;width:1px;height:2px;background:#4a4a4a"></div><div class="a" style="left:398px;top:520px;width:1px;height:2px;background:#4a4a4a"></div><div class="a" style="left:387px;top:520px;width:1px;height:2px;background:#4a4a4a"></div><div class="a" style="left:377px;top:520px;width:1px;height:2px;background:#4a4a4a"></div><div class="a" style="left:366px;top:520px;width:1px;height:2px;background:#4a4a4a"></div><div class="a" style="left:355px;top:520px;width:1px;height:2px;background:#4a4a4a"></div><div class="a" style="left:345px;top:520px;width:1px;height:2px;background:#4a4a4a"></div><div class="a" style="left:334px;top:520px;width:1px;height:2px;background:#4a4a4a"></div><div class="a" style="left:323px;top:520px;width:1px;height:2px;background:#4a4a4a"></div><div class="a" style="left:313px;top:520px;width:1px;height:2px;background:#4a4a4a"></div><div class="a" style="left:302px;top:520px;width:1px;height:2px;background:#4a4a4a"></div>
<div class="inp" style="left:540px;top:502px;width:161px;height:24px"></div>
<div class="a" style="left:676px;top:503px;width:1px;height:22px;background:#c2c2c2;"></div>
<div class="inp" style="left:705px;top:502px;width:38px;height:24px"></div>
<div class="inp" style="left:753px;top:502px;width:160px;height:24px"></div>
<div class="a" style="left:888px;top:503px;width:1px;height:22px;background:#c2c2c2;"></div>
<svg class="a" style="left:0;top:0;overflow:visible" width="1" height="1"><text x="194" y="547.6" textLength="97.5" lengthAdjust="spacingAndGlyphs" font-family="Liberation Sans" font-size="16" font-weight="normal" fill="#303030" style="" text-decoration="">3rd quarter [O]</text></svg>
<div class="a" style="left:526px;top:548px;width:1px;height:2px;background:#4a4a4a"></div><div class="a" style="left:515px;top:548px;width:1px;height:2px;background:#4a4a4a"></div><div class="a" style="left:504px;top:548px;width:1px;height:2px;background:#4a4a4a"></div><div class="a" style="left:494px;top:548px;width:1px;height:2px;background:#4a4a4a"></div><div class="a" style="left:483px;top:548px;width:1px;height:2px;background:#4a4a4a"></div><div class="a" style="left:472px;top:548px;width:1px;height:2px;background:#4a4a4a"></div><div class="a" style="left:462px;top:548px;width:1px;height:2px;background:#4a4a4a"></div><div class="a" style="left:451px;top:548px;width:1px;height:2px;background:#4a4a4a"></div><div class="a" style="left:440px;top:548px;width:1px;height:2px;background:#4a4a4a"></div><div class="a" style="left:430px;top:548px;width:1px;height:2px;background:#4a4a4a"></div><div class="a" style="left:419px;top:548px;width:1px;height:2px;background:#4a4a4a"></div><div class="a" style="left:408px;top:548px;width:1px;height:2px;background:#4a4a4a"></div><div class="a" style="left:398px;top:548px;width:1px;height:2px;background:#4a4a4a"></div><div class="a" style="left:387px;top:548px;width:1px;height:2px;background:#4a4a4a"></div><div class="a" style="left:377px;top:548px;width:1px;height:2px;background:#4a4a4a"></div><div class="a" style="left:366px;top:548px;width:1px;height:2px;background:#4a4a4a"></div><div class="a" style="left:355px;top:548px;width:1px;height:2px;background:#4a4a4a"></div><div class="a" style="left:345px;top:548px;width:1px;height:2px;background:#4a4a4a"></div><div class="a" style="left:334px;top:548px;width:1px;height:2px;background:#4a4a4a"></div><div class="a" style="left:323px;top:548px;width:1px;height:2px;background:#4a4a4a"></div><div class="a" style="left:313px;top:548px;width:1px;height:2px;background:#4a4a4a"></div><div class="a" style="left:302px;top:548px;width:1px;height:2px;background:#4a4a4a"></div><div class="a" style="left:291px;top:548px;width:1px;height:2px;background:#4a4a4a"></div>
<div class="inp" style="left:540px;top:530px;width:161px;height:24px"></div>
<div class="a" style="left:676px;top:531px;width:1px;height:22px;background:#c2c2c2;"></div>
<div class="inp" style="left:705px;top:530px;width:38px;height:24px"></div>
<div class="inp" style="left:753px;top:530px;width:160px;height:24px"></div>
<div class="a" style="left:888px;top:531px;width:1px;height:22px;background:#c2c2c2;"></div>
<svg class="a" style="left:0;top:0;overflow:visible" width="1" height="1"><text x="194" y="575.6" textLength="97.5" lengthAdjust="spacingAndGlyphs" font-family="Liberation Sans" font-size="16" font-weight="normal" fill="#303030" style="" text-decoration="">4th quarter [O]</text></svg>
<div class="a" style="left:526px;top:576px;width:1px;height:2px;background:#4a4a4a"></div><div class="a" style="left:515px;top:576px;width:1px;height:2px;background:#4a4a4a"></div><div class="a" style="left:504px;top:576px;width:1px;height:2px;background:#4a4a4a"></div><div class="a" style="left:494px;top:576px;width:1px;height:2px;background:#4a4a4a"></div><div class="a" style="left:483px;top:576px;width:1px;height:2px;background:#4a4a4a"></div><div class="a" style="left:472px;top:576px;width:1px;height:2px;background:#4a4a4a"></div><div class="a" style="left:462px;top:576px;width:1px;height:2px;background:#4a4a4a"></div><div class="a" style="left:451px;top:576px;width:1px;height:2px;background:#4a4a4a"></div><div class="a" style="left:440px;top:576px;width:1px;height:2px;background:#4a4a4a"></div><div class="a" style="left:430px;top:576px;width:1px;height:2px;background:#4a4a4a"></div><div class="a" style="left:419px;top:576px;width:1px;height:2px;background:#4a4a4a"></div><div class="a" style="left:408px;top:576px;width:1px;height:2px;background:#4a4a4a"></div><div class="a" style="left:398px;top:576px;width:1px;height:2px;background:#4a4a4a"></div><div class="a" style="left:387px;top:576px;width:1px;height:2px;background:#4a4a4a"></div><div class="a" style="left:377px;top:576px;width:1px;height:2px;background:#4a4a4a"></div><div class="a" style="left:366px;top:576px;width:1px;height:2px;background:#4a4a4a"></div><div class="a" style="left:355px;top:576px;width:1px;height:2px;background:#4a4a4a"></div><div class="a" style="left:345px;top:576px;width:1px;height:2px;background:#4a4a4a"></div><div class="a" style="left:334px;top:576px;width:1px;height:2px;background:#4a4a4a"></div><div class="a" style="left:323px;top:576px;width:1px;height:2px;background:#4a4a4a"></div><div class="a" style="left:313px;top:576px;width:1px;height:2px;background:#4a4a4a"></div><div class="a" style="left:302px;top:576px;width:1px;height:2px;background:#4a4a4a"></div><div class="a" style="left:291px;top:576px;width:1px;height:2px;background:#4a4a4a"></div>
<div class="inp" style="left:540px;top:558px;width:161px;height:24px"></div>
<div class="a" style="left:676px;top:559px;width:1px;height:22px;background:#c2c2c2;"></div>
<div class="inp" style="left:705px;top:558px;width:38px;height:24px"></div>
<div class="inp" style="left:753px;top:558px;width:160px;height:24px"></div>
<div class="a" style="left:888px;top:559px;width:1px;height:22px;background:#c2c2c2;"></div>
<div class="a" style="left:857.5px;top:476px;width:28.5px;height:19px;background:#2f6fd0;"></div>
<svg class="a" style="left:0;top:0;overflow:visible" width="1" height="1"><text x="857.5" y="491.2" textLength="28" lengthAdjust="spacingAndGlyphs" stroke="#ffffff" stroke-width="0.6" font-family="Liberation Sans" font-size="16.5" font-weight="normal" fill="#ffffff" style="" text-decoration="">500</text></svg>
<div class="a" style="left:885.5px;top:476px;width:1px;height:19px;background:#000;"></div>
<div class="a" style="left:889px;top:474px;width:24px;height:24px;background:linear-gradient(#f4f7fa,#d4dde6);border:1px solid #222;border-radius:1px"></div>
<svg class="a" style="left:889px;top:474px" width="24" height="24"><path d="M7.5,5.5 L13.5,5.5 L16.5,8.5 L16.5,18.5 L7.5,18.5 Z" fill="#fff" stroke="#111" stroke-width="1.6"/></svg>
<div class="inp" style="left:918px;top:474px;width:37px;height:24px"></div>
<div class="a" style="left:946px;top:475px;width:8px;height:22px;background:#ececec;"></div>
<div class="a" style="left:949px;top:485px;width:2px;height:2px;background:#333"></div>
<div class="inp" style="left:918px;top:502px;width:37px;height:24px"></div>
<div class="a" style="left:946px;top:503px;width:8px;height:22px;background:#ececec;"></div>
<div class="a" style="left:949px;top:513px;width:2px;height:2px;background:#333"></div>
<svg class="a" style="left:0;top:0;overflow:visible" width="1" height="1"><text x="857.5" y="519.2" textLength="28" lengthAdjust="spacingAndGlyphs" stroke="#1c2486" stroke-width="0.6" font-family="Liberation Sans" font-size="16.5" font-weight="normal" fill="#1c2486" style="" text-decoration="">500</text></svg>
<div class="inp" style="left:918px;top:530px;width:37px;height:24px"></div>
<div class="a" style="left:946px;top:531px;width:8px;height:22px;background:#ececec;"></div>
<div class="a" style="left:949px;top:541px;width:2px;height:2px;background:#333"></div>
<svg class="a" style="left:0;top:0;overflow:visible" width="1" height="1"><text x="857.5" y="547.2" textLength="28" lengthAdjust="spacingAndGlyphs" stroke="#1c2486" stroke-width="0.6" font-family="Liberation Sans" font-size="16.5" font-weight="normal" fill="#1c2486" style="" text-decoration="">500</text></svg>
<div class="inp" style="left:918px;top:558px;width:37px;height:24px"></div>
<div class="a" style="left:946px;top:559px;width:8px;height:22px;background:#ececec;"></div>
<div class="a" style="left:949px;top:569px;width:2px;height:2px;background:#333"></div>
<svg class="a" style="left:0;top:0;overflow:visible" width="1" height="1"><text x="857.5" y="575.2" textLength="28" lengthAdjust="spacingAndGlyphs" stroke="#1c2486" stroke-width="0.6" font-family="Liberation Sans" font-size="16.5" font-weight="normal" fill="#1c2486" style="" text-decoration="">500</text></svg>
<svg class="a" style="left:0;top:0;overflow:visible" width="1" height="1"><text x="923.5" y="491.5" textLength="20" lengthAdjust="spacingAndGlyphs" font-family="Liberation Sans" font-size="14" font-weight="normal" fill="#222" style="font-family:Liberation Mono" text-decoration="">OR</text></svg>
<svg class="a" style="left:0;top:0;overflow:visible" width="1" height="1"><text x="923.5" y="575.5" textLength="20" lengthAdjust="spacingAndGlyphs" font-family="Liberation Sans" font-size="14" font-weight="normal" fill="#4050a8" style="font-family:Liberation Mono" text-decoration="">OR</text></svg>
<svg class="a" style="left:0;top:0;overflow:visible" width="1" height="1"><text x="923.5" y="519.5" textLength="20" lengthAdjust="spacingAndGlyphs" font-family="Liberation Sans" font-size="14" font-weight="normal" fill="#6a78c8" style="font-family:Liberation Mono" text-decoration="">OR</text></svg>
<svg class="a" style="left:0;top:0;overflow:visible" width="1" height="1"><text x="923.5" y="547.5" textLength="20" lengthAdjust="spacingAndGlyphs" font-family="Liberation Sans" font-size="14" font-weight="normal" fill="#6a78c8" style="font-family:Liberation Mono" text-decoration="">OR</text></svg>
<div class="a" style="left:927px;top:497.5px;width:29px;height:60px;background:#fff;border:1px solid #8a8a8a"></div>
<div class="a" style="left:928px;top:498.5px;width:27px;height:19.5px;background:#2f78d2;"></div>
<svg class="a" style="left:0;top:0;overflow:visible" width="1" height="1"><text x="928.5" y="515.5" textLength="24.5" lengthAdjust="spacingAndGlyphs" font-family="Liberation Sans" font-size="16" font-weight="normal" fill="#fff" style="" text-decoration="">CA</text></svg>
<svg class="a" style="left:0;top:0;overflow:visible" width="1" height="1"><text x="928.5" y="535.5" textLength="24.5" lengthAdjust="spacingAndGlyphs" font-family="Liberation Sans" font-size="16" font-weight="normal" fill="#111" style="" text-decoration="">NY</text></svg>
<svg class="a" style="left:0;top:0;overflow:visible" width="1" height="1"><text x="928.5" y="555" textLength="24.5" lengthAdjust="spacingAndGlyphs" font-family="Liberation Sans" font-size="16" font-weight="normal" fill="#111" style="" text-decoration="">OR</text></svg>
<div class="a" style="left:166px;top:596px;width:14px;height:14px;border:1px solid #333;background:#fff"></div>
<svg class="a" style="left:0;top:0;overflow:visible" width="1" height="1"><text x="188.8" y="608.8" textLength="318.5" lengthAdjust="spacingAndGlyphs" font-family="Liberation Sans" font-size="16" font-weight="normal" fill="#303030" style="" text-decoration="">Do not reduce override by overpayment applied</text></svg>
<svg class="a" style="left:0;top:0;overflow:visible" width="1" height="1"><text x="166.5" y="635" textLength="153.5" lengthAdjust="spacingAndGlyphs" font-family="Liberation Sans" font-size="16" font-weight="normal" fill="#303030" style="" text-decoration="">2026 estimated tax [O]</text></svg>
<div class="a" style="left:526px;top:635px;width:1px;height:2px;background:#4a4a4a"></div><div class="a" style="left:515px;top:635px;width:1px;height:2px;background:#4a4a4a"></div><div class="a" style="left:504px;top:635px;width:1px;height:2px;background:#4a4a4a"></div><div class="a" style="left:494px;top:635px;width:1px;height:2px;background:#4a4a4a"></div><div class="a" style="left:483px;top:635px;width:1px;height:2px;background:#4a4a4a"></div><div class="a" style="left:473px;top:635px;width:1px;height:2px;background:#4a4a4a"></div><div class="a" style="left:462px;top:635px;width:1px;height:2px;background:#4a4a4a"></div><div class="a" style="left:451px;top:635px;width:1px;height:2px;background:#4a4a4a"></div><div class="a" style="left:441px;top:635px;width:1px;height:2px;background:#4a4a4a"></div><div class="a" style="left:430px;top:635px;width:1px;height:2px;background:#4a4a4a"></div><div class="a" style="left:419px;top:635px;width:1px;height:2px;background:#4a4a4a"></div><div class="a" style="left:409px;top:635px;width:1px;height:2px;background:#4a4a4a"></div><div class="a" style="left:398px;top:635px;width:1px;height:2px;background:#4a4a4a"></div><div class="a" style="left:387px;top:635px;width:1px;height:2px;background:#4a4a4a"></div><div class="a" style="left:377px;top:635px;width:1px;height:2px;background:#4a4a4a"></div><div class="a" style="left:366px;top:635px;width:1px;height:2px;background:#4a4a4a"></div><div class="a" style="left:355px;top:635px;width:1px;height:2px;background:#4a4a4a"></div><div class="a" style="left:345px;top:635px;width:1px;height:2px;background:#4a4a4a"></div><div class="a" style="left:334px;top:635px;width:1px;height:2px;background:#4a4a4a"></div><div class="a" style="left:323px;top:635px;width:1px;height:2px;background:#4a4a4a"></div>
<div class="inp" style="left:540px;top:618px;width:161px;height:24px"></div>
<div class="a" style="left:676px;top:619px;width:1px;height:22px;background:#c2c2c2;"></div>
<div class="inp" style="left:705px;top:618px;width:38px;height:24px"></div>
<div class="inp" style="left:753px;top:618px;width:160px;height:24px"></div>
<div class="a" style="left:889px;top:619px;width:1px;height:22px;background:#c2c2c2;"></div>
<div class="inp" style="left:917px;top:618px;width:38px;height:24px"></div>
</body></html>
